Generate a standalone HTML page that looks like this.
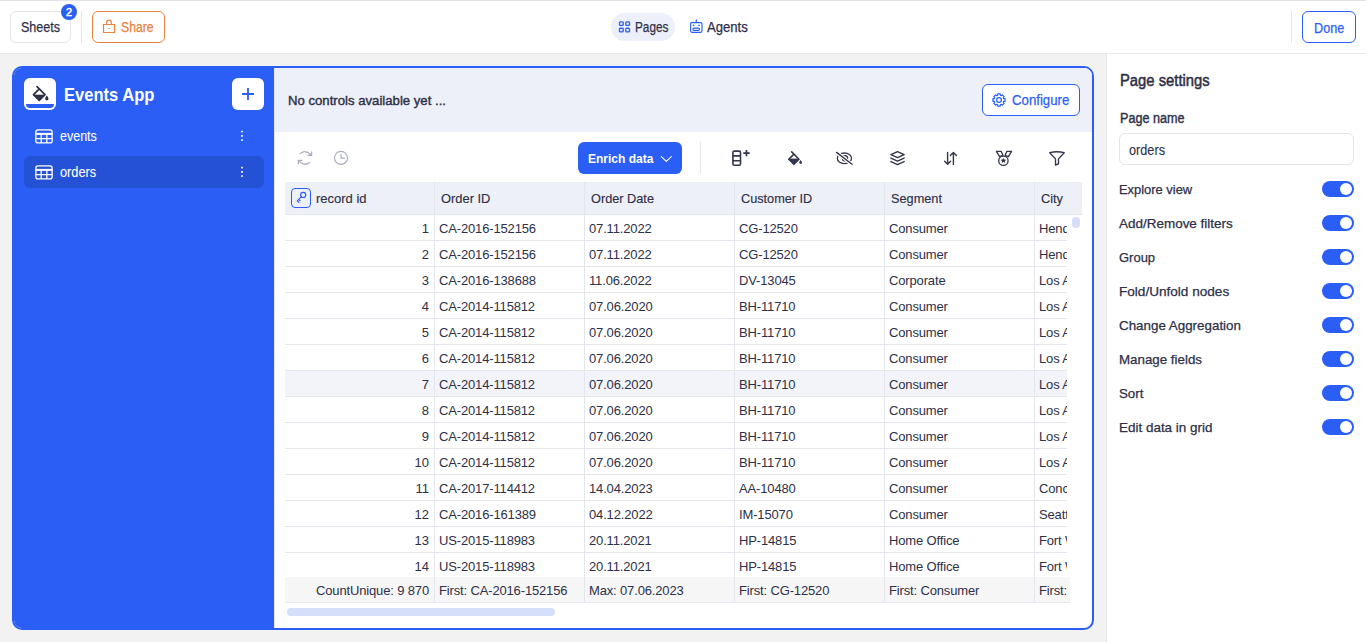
<!DOCTYPE html><html><head><meta charset="utf-8"><style>
*{box-sizing:border-box;margin:0;padding:0}
html,body{width:1366px;height:642px;overflow:hidden;background:#f2f2f2;font-family:"Liberation Sans",sans-serif;color:#2e3047}
.a{position:absolute}
.topbar{position:absolute;left:0;top:0;width:1366px;height:54px;background:#fff;border-top:1px solid #e2e2e2;border-bottom:1px solid #e6e8ee}
.btn{position:absolute;border-radius:6px}
.sep{position:absolute;width:1px;background:#e4e6ee}
.card{position:absolute;left:12px;top:66px;width:1082px;height:564px;border:2px solid #2a5ef4;border-radius:10px;overflow:hidden;background:#fff}
.t{position:absolute;white-space:nowrap;line-height:1}
.cell{position:absolute;white-space:nowrap;font-size:13px;line-height:26px;overflow:hidden;top:0}
.tog{position:absolute;left:1322px;width:32px;height:16px;border-radius:8px;background:#2a5ef4}
.tog::after{content:"";position:absolute;left:18px;top:2px;width:12px;height:12px;border-radius:6px;background:#fff}
</style></head><body><div class="topbar"></div>
<div class="btn" style="left:10px;top:11px;width:61px;height:32px;border:1px solid #e3e5ec"></div>
<div class="t" style="left:21px;top:19.95px;font-size:14px;transform:scaleX(0.8949);transform-origin:0 0;color:#2e3047;-webkit-text-stroke:0.25px currentColor;">Sheets</div>
<div class="a" style="left:61px;top:4px;width:16px;height:16px;border-radius:8px;background:#2a5ef4;color:#fff;font-size:11px;line-height:16px;text-align:center;-webkit-text-stroke:0.45px #fff">2</div>
<div class="sep" style="left:81px;top:11px;height:32px"></div>
<div class="btn" style="left:92px;top:11px;width:73px;height:32px;border:1px solid #ea8240"></div>
<svg class="a" style="left:102px;top:19px" width="14" height="15" viewBox="0 0 14 15"><path d="M1.5 5.5h11v8h-11z M4.7 5.5V3.4a2.3 2.3 0 0 1 4.6 0v2.1 M6.5 9.5h1.2" fill="none" stroke="#ea8240" stroke-width="1.2"/></svg>
<div class="t" style="left:121px;top:19.95px;font-size:14px;transform:scaleX(0.8703);transform-origin:0 0;color:#ea8240;-webkit-text-stroke:0.25px currentColor;">Share</div>
<div class="a" style="left:611px;top:13px;width:64px;height:28px;border-radius:14px;background:#edf0fa"></div>
<svg class="a" style="left:617px;top:19px" width="15" height="15" viewBox="617 19 15 15"><g fill="none" stroke="#2a5ef4" stroke-width="1.35"><rect x="619.5" y="21.8" width="3.7" height="3.6" rx="0.9"/><rect x="625.8" y="21.8" width="3.7" height="3.6" rx="0.9"/><rect x="619.5" y="28.2" width="3.7" height="3.6" rx="0.9"/><rect x="625.8" y="28.2" width="3.7" height="3.6" rx="0.9"/></g></svg>
<div class="t" style="left:634.5px;top:19.85px;font-size:14px;transform:scaleX(0.8416);transform-origin:0 0;color:#2e3047;-webkit-text-stroke:0.25px currentColor;">Pages</div>
<svg class="a" style="left:688px;top:17px" width="17" height="17" viewBox="688 17 17 17"><g fill="none" stroke="#2a5ef4" stroke-width="1.15"><rect x="690.6" y="22.6" width="11.4" height="9.7" rx="1.2"/><path d="M696.3 19.6V22.6 M698.2 25.4H699.8"/><rect x="692.9" y="28.1" width="6.6" height="2.3" rx="1.1"/></g><circle cx="693.5" cy="25.4" r="0.8" fill="#2a5ef4"/></svg>
<div class="t" style="left:707px;top:19.85px;font-size:14px;transform:scaleX(0.9362);transform-origin:0 0;color:#2e3047;-webkit-text-stroke:0.25px currentColor;">Agents</div>
<div class="sep" style="left:1291px;top:11px;height:32px"></div>
<div class="btn" style="left:1302px;top:11px;width:54px;height:32px;border:1px solid #2a5ef4"></div>
<div class="t" style="left:1314.2px;top:20.55px;font-size:14px;transform:scaleX(0.9028);transform-origin:0 0;color:#2a5ef4;-webkit-text-stroke:0.25px currentColor;">Done</div>
<div class="card">
<div class="a" style="left:0;top:0;width:260px;height:560px;background:#2a5ef4"></div>
</div>
<div class="a" style="left:24px;top:78px;width:32px;height:32px;border-radius:6px;background:#fff;overflow:hidden"><div class="a" style="left:2px;top:26px;width:28px;height:4px;background:#2a5ef4;border-radius:0 0 4px 4px"></div><svg class="a" style="left:8px;top:7px" width="18" height="18" viewBox="32 85 18 18"><path d="M37 86.6 L45 94.6 L39.25 100.35 L33.5 94.6 L39.25 88.85" fill="none" stroke="#2e3047" stroke-width="1.7" stroke-linejoin="round" stroke-linecap="round"/><path d="M33.8 95.1 L44.7 95.1 L39.25 100.35 Z" fill="#2e3047" stroke="#2e3047" stroke-width="0.8" stroke-linejoin="round"/><path d="M46.8 95.6 C47.6 96.8 48.5 97.7 48.5 98.8 A1.7 1.7 0 0 1 45.1 98.8 C45.1 97.7 46 96.8 46.8 95.6Z" fill="#2e3047"/></svg></div>
<div class="t" style="left:64.3px;top:85.96px;font-size:18px;transform:scaleX(0.9199);transform-origin:0 0;font-weight:bold;color:#fff;">Events App</div>
<div class="a" style="left:232px;top:78px;width:32px;height:32px;border-radius:6px;background:#fff"><svg class="a" style="left:8px;top:8px" width="16" height="16" viewBox="0 0 16 16"><path d="M8 2v12 M2 8h12" stroke="#2a5ef4" stroke-width="1.8"/></svg></div>
<div class="a" style="left:24px;top:156px;width:240px;height:32px;border-radius:6px;background:#2451d6"></div>
<svg class="a" style="left:35px;top:129px" width="18" height="15" viewBox="0 0 18 15"><g fill="none" stroke="#fff" stroke-width="1.3"><rect x="0.85" y="0.85" width="16.3" height="13" rx="2.2"/><path d="M0.9 4.9h16.2" stroke-width="2"/><path d="M0.9 9.6h16.2 M6.2 4.9v9 M11.8 4.9v9"/></g></svg>
<svg class="a" style="left:35px;top:165px" width="18" height="15" viewBox="0 0 18 15"><g fill="none" stroke="#fff" stroke-width="1.3"><rect x="0.85" y="0.85" width="16.3" height="13" rx="2.2"/><path d="M0.9 4.9h16.2" stroke-width="2"/><path d="M0.9 9.6h16.2 M6.2 4.9v9 M11.8 4.9v9"/></g></svg>
<div class="t" style="left:60.1px;top:129.15px;font-size:14px;transform:scaleX(0.8925);transform-origin:0 0;color:#fff;-webkit-text-stroke:0.1px currentColor;">events</div>
<div class="t" style="left:60.1px;top:164.85px;font-size:14px;transform:scaleX(0.9128);transform-origin:0 0;color:#fff;-webkit-text-stroke:0.1px currentColor;">orders</div>
<svg class="a" style="left:240px;top:130px" width="4" height="12" viewBox="0 0 4 12"><g fill="#e4eafc"><rect x="1" y="0.8" width="2" height="1.6"/><rect x="1" y="5" width="2" height="1.8"/><rect x="1" y="9.3" width="2" height="1.6"/></g></svg>
<svg class="a" style="left:240px;top:166px" width="4" height="12" viewBox="0 0 4 12"><g fill="#e4eafc"><rect x="1" y="0.8" width="2" height="1.6"/><rect x="1" y="5" width="2" height="1.8"/><rect x="1" y="9.3" width="2" height="1.6"/></g></svg>
<div class="a" style="left:274px;top:68px;width:1px;height:560px;background:#e3e6f0"></div>
<div class="a" style="left:275px;top:68px;width:817px;height:64px;background:#eef0f9;border-top-right-radius:8px"></div>
<div class="t" style="left:287.5px;top:93.60px;font-size:13px;transform:scaleX(1.0121);transform-origin:0 0;color:#2e3047;-webkit-text-stroke:0.4px currentColor;">No controls available yet ...</div>
<div class="a" style="left:982px;top:84px;width:98px;height:32px;border-radius:6px;border:1px solid #2a5ef4;background:#fff"></div>
<svg class="a" style="left:990px;top:91px" width="18" height="18" viewBox="990 91 18 18"><g fill="none" stroke="#2a5ef4" stroke-width="1.2" stroke-linejoin="round"><path d="M1003.71 98.65 L1005.06 98.71 L1005.06 101.29 L1003.71 101.35 L1003.29 102.38 L1004.20 103.38 L1002.38 105.20 L1001.38 104.29 L1000.35 104.71 L1000.29 106.06 L997.71 106.06 L997.65 104.71 L996.62 104.29 L995.62 105.20 L993.80 103.38 L994.71 102.38 L994.29 101.35 L992.94 101.29 L992.94 98.71 L994.29 98.65 L994.71 97.62 L993.80 96.62 L995.62 94.80 L996.62 95.71 L997.65 95.29 L997.71 93.94 L1000.29 93.94 L1000.35 95.29 L1001.38 95.71 L1002.38 94.80 L1004.20 96.62 L1003.29 97.62Z"/><circle cx="999" cy="100" r="2.4"/></g></svg>
<div class="t" style="left:1011.7px;top:92.95px;font-size:14px;transform:scaleX(0.9444);transform-origin:0 0;color:#2a5ef4;-webkit-text-stroke:0.25px currentColor;">Configure</div>
<svg class="a" style="left:296px;top:148px" width="18" height="19" viewBox="296 148 18 19"><g fill="none" stroke="#acafc0" stroke-width="1.25" stroke-linecap="round" stroke-linejoin="round"><path d="M300.3 153.6 Q305.3 149.3 311 154.8 M311.6 151.9 V155.4 H307.9"/><path d="M309.7 162.4 Q304.2 166.7 298.9 161.1 M298.4 163.7 V160.3 H302"/></g></svg>
<svg class="a" style="left:333px;top:150px" width="16" height="16" viewBox="333 150 16 16"><g fill="none" stroke="#acafc0" stroke-width="1.2" stroke-linecap="round"><circle cx="341" cy="157.9" r="6.5"/><path d="M341 154.3V158.1H344.8"/></g></svg>
<div class="btn" style="left:578px;top:142px;width:104px;height:32px;background:#2a5ef4"></div>
<div class="t" style="left:588.4px;top:152.30px;font-size:13px;transform:scaleX(0.9238);transform-origin:0 0;font-weight:bold;color:#fff;">Enrich data</div>
<svg class="a" style="left:659px;top:154px" width="14" height="10" viewBox="659 154 14 10"><path d="M661.3 156.6 L666.3 161.4 L671.3 156.6" fill="none" stroke="#fff" stroke-width="1.1" stroke-linecap="round" stroke-linejoin="round"/></svg>
<div class="sep" style="left:700px;top:142px;height:32px"></div>
<svg class="a" style="left:730px;top:148px" width="22" height="20" viewBox="730 148 22 20"><g fill="none" stroke="#33364c" stroke-width="1.6"><rect x="732.9" y="151.1" width="7.6" height="14.1" rx="1.3"/><path d="M732.9 155.9h7.6 M732.9 160.7h7.6"/><path d="M746.5 149.9V156.3 M743.3 153.1H749.7" stroke-width="1.7"/></g></svg>
<svg class="a" style="left:786px;top:149px" width="18" height="18" viewBox="786 149 18 18"><path d="M791.7 151.9 L799 159.2 L793.9 164.3 L788.8 159.2 L793.9 154.1" fill="none" stroke="#33364c" stroke-width="1.6" stroke-linejoin="round" stroke-linecap="round"/><path d="M788.8 159 L799 159 L793.9 164.3 Z" fill="#33364c" stroke="#33364c" stroke-width="0.8" stroke-linejoin="round"/><path d="M800.6 160.1 C801.3 161 802 161.8 802 162.6 A1.4 1.4 0 0 1 799.2 162.6 C799.2 161.8 799.9 161 800.6 160.1Z" fill="#33364c"/></svg>
<svg class="a" style="left:834px;top:149px" width="21" height="18" viewBox="834 149 21 18"><g fill="none" stroke-linecap="round"><ellipse cx="844.4" cy="158.3" rx="7.1" ry="5.3" stroke="#33364c" stroke-width="1.3"/><circle cx="845" cy="158.3" r="2.6" stroke="#33364c" stroke-width="1.3"/><path d="M836.6 152.4 L852 164.3" stroke="#fff" stroke-width="3.4"/><path d="M836.6 152.4 L852 164.3" stroke="#33364c" stroke-width="1.35"/></g></svg>
<svg class="a" style="left:888px;top:148px" width="19" height="20" viewBox="888 148 19 20"><g fill="none" stroke="#33364c" stroke-width="1.45" stroke-linejoin="round" stroke-linecap="round"><path d="M890.9 154.6 L897.5 151.6 L904.1 154.6 L897.5 157.6 Z"/><path d="M890.9 158.1 L897.5 161.1 L904.1 158.1 M890.9 161.6 L897.5 164.6 L904.1 161.6"/></g></svg>
<svg class="a" style="left:942px;top:149px" width="17" height="18" viewBox="942 149 17 18"><g fill="none" stroke="#33364c" stroke-width="1.4" stroke-linecap="round" stroke-linejoin="round"><path d="M947.6 152.4V164.2 M944.6 161.2L947.6 164.2 950.6 161.2"/><path d="M953.4 164.4V152.6 M950.4 155.6L953.4 152.6 956.4 155.6"/></g></svg>
<svg class="a" style="left:994px;top:149px" width="20" height="18" viewBox="994 149 20 18"><g stroke="#33364c" stroke-width="1.3" stroke-linejoin="round" fill="#fff"><path d="M996.4 151.3 H1001.1 L1002.9 155.3 L999.6 156.6 Z"/><path d="M1011.6 151.3 H1006.9 L1005.1 155.3 L1008.4 156.6 Z"/><circle cx="1003.4" cy="160.75" r="4.7"/></g><path d="M1003.4 157.9l.85 1.7 1.9.25-1.4 1.3.4 1.9-1.75-.95-1.75.95.4-1.9-1.4-1.3 1.9-.25z" fill="#33364c"/></svg>
<svg class="a" style="left:1046px;top:149px" width="21" height="19" viewBox="1046 149 21 19"><path d="M1049.7 152.7 C1054.5 151.5 1059.5 151.5 1064.2 152.7 L1058.5 158.9 V163.8 L1055.5 165 V158.9 Z" fill="none" stroke="#33364c" stroke-width="1.35" stroke-linejoin="round"/></svg>
<div class="a" style="left:285px;top:182px;width:797px;height:33px;background:#eef0f8;border-bottom:1px solid #e4e6ee"></div>
<div class="a" style="left:434px;top:182px;width:1px;height:421px;background:#e4e6ee"></div>
<div class="a" style="left:584px;top:182px;width:1px;height:421px;background:#e4e6ee"></div>
<div class="a" style="left:734px;top:182px;width:1px;height:421px;background:#e4e6ee"></div>
<div class="a" style="left:884px;top:182px;width:1px;height:421px;background:#e4e6ee"></div>
<div class="a" style="left:1034px;top:182px;width:1px;height:421px;background:#e4e6ee"></div>
<div class="a" style="left:291px;top:188px;width:20px;height:20px;border:1px solid #2a5ef4;border-radius:4px"></div>
<svg class="a" style="left:292px;top:189px" width="18" height="18" viewBox="292 189 18 18"><g fill="none" stroke="#2a5ef4" stroke-width="1.15" stroke-linecap="round" stroke-linejoin="round"><circle cx="303.2" cy="194.9" r="2.55"/><path d="M301.4 196.7 L297.3 200.8 L298.9 202.4 M298.7 199.4 L300 200.7"/></g></svg>
<div class="t" style="left:315.5px;top:191.90px;font-size:13px;transform:scaleX(0.9981);transform-origin:0 0;color:#2e3047;-webkit-text-stroke:0.15px currentColor;">record id</div>
<div class="t" style="left:440.9px;top:191.90px;font-size:13px;transform:scaleX(0.9911);transform-origin:0 0;color:#2e3047;-webkit-text-stroke:0.15px currentColor;">Order ID</div>
<div class="t" style="left:591.2px;top:191.90px;font-size:13px;transform:scaleX(0.9796);transform-origin:0 0;color:#2e3047;-webkit-text-stroke:0.15px currentColor;">Order Date</div>
<div class="t" style="left:740.9px;top:191.90px;font-size:13px;transform:scaleX(0.9771);transform-origin:0 0;color:#2e3047;-webkit-text-stroke:0.15px currentColor;">Customer ID</div>
<div class="t" style="left:891px;top:191.90px;font-size:13px;transform:scaleX(0.9799);transform-origin:0 0;color:#2e3047;-webkit-text-stroke:0.15px currentColor;">Segment</div>
<div class="t" style="left:1040.7px;top:191.90px;font-size:13px;transform:scaleX(0.9826);transform-origin:0 0;color:#2e3047;-webkit-text-stroke:0.15px currentColor;">City</div>
<div class="a" style="left:285px;top:215px;width:785px;height:387px;overflow:hidden;letter-spacing:-0.15px">
<div class="a" style="left:0;top:0px;width:782px;height:26px;background:#fff;border-bottom:1px solid #e4e6ee">
<div class="cell" style="left:0;top:1px;width:144px;text-align:right;letter-spacing:0">1</div>
<div class="cell" style="left:154px;top:1px;width:144px">CA-2016-152156</div>
<div class="cell" style="left:304px;top:1px;width:144px">07.11.2022</div>
<div class="cell" style="left:454px;top:1px;width:144px">CG-12520</div>
<div class="cell" style="left:604px;top:1px;width:144px">Consumer</div>
<div class="cell" style="left:754px;top:1px;width:28px">Henderson</div>
</div>
<div class="a" style="left:0;top:26px;width:782px;height:26px;background:#fff;border-bottom:1px solid #e4e6ee">
<div class="cell" style="left:0;top:1px;width:144px;text-align:right;letter-spacing:0">2</div>
<div class="cell" style="left:154px;top:1px;width:144px">CA-2016-152156</div>
<div class="cell" style="left:304px;top:1px;width:144px">07.11.2022</div>
<div class="cell" style="left:454px;top:1px;width:144px">CG-12520</div>
<div class="cell" style="left:604px;top:1px;width:144px">Consumer</div>
<div class="cell" style="left:754px;top:1px;width:28px">Henderson</div>
</div>
<div class="a" style="left:0;top:52px;width:782px;height:26px;background:#fff;border-bottom:1px solid #e4e6ee">
<div class="cell" style="left:0;top:1px;width:144px;text-align:right;letter-spacing:0">3</div>
<div class="cell" style="left:154px;top:1px;width:144px">CA-2016-138688</div>
<div class="cell" style="left:304px;top:1px;width:144px">11.06.2022</div>
<div class="cell" style="left:454px;top:1px;width:144px">DV-13045</div>
<div class="cell" style="left:604px;top:1px;width:144px">Corporate</div>
<div class="cell" style="left:754px;top:1px;width:28px">Los Angeles</div>
</div>
<div class="a" style="left:0;top:78px;width:782px;height:26px;background:#fff;border-bottom:1px solid #e4e6ee">
<div class="cell" style="left:0;top:1px;width:144px;text-align:right;letter-spacing:0">4</div>
<div class="cell" style="left:154px;top:1px;width:144px">CA-2014-115812</div>
<div class="cell" style="left:304px;top:1px;width:144px">07.06.2020</div>
<div class="cell" style="left:454px;top:1px;width:144px">BH-11710</div>
<div class="cell" style="left:604px;top:1px;width:144px">Consumer</div>
<div class="cell" style="left:754px;top:1px;width:28px">Los Angeles</div>
</div>
<div class="a" style="left:0;top:104px;width:782px;height:26px;background:#fff;border-bottom:1px solid #e4e6ee">
<div class="cell" style="left:0;top:1px;width:144px;text-align:right;letter-spacing:0">5</div>
<div class="cell" style="left:154px;top:1px;width:144px">CA-2014-115812</div>
<div class="cell" style="left:304px;top:1px;width:144px">07.06.2020</div>
<div class="cell" style="left:454px;top:1px;width:144px">BH-11710</div>
<div class="cell" style="left:604px;top:1px;width:144px">Consumer</div>
<div class="cell" style="left:754px;top:1px;width:28px">Los Angeles</div>
</div>
<div class="a" style="left:0;top:130px;width:782px;height:26px;background:#fff;border-bottom:1px solid #e4e6ee">
<div class="cell" style="left:0;top:1px;width:144px;text-align:right;letter-spacing:0">6</div>
<div class="cell" style="left:154px;top:1px;width:144px">CA-2014-115812</div>
<div class="cell" style="left:304px;top:1px;width:144px">07.06.2020</div>
<div class="cell" style="left:454px;top:1px;width:144px">BH-11710</div>
<div class="cell" style="left:604px;top:1px;width:144px">Consumer</div>
<div class="cell" style="left:754px;top:1px;width:28px">Los Angeles</div>
</div>
<div class="a" style="left:0;top:156px;width:782px;height:26px;background:#f3f4f9;border-bottom:1px solid #e4e6ee">
<div class="cell" style="left:0;top:1px;width:144px;text-align:right;letter-spacing:0">7</div>
<div class="cell" style="left:154px;top:1px;width:144px">CA-2014-115812</div>
<div class="cell" style="left:304px;top:1px;width:144px">07.06.2020</div>
<div class="cell" style="left:454px;top:1px;width:144px">BH-11710</div>
<div class="cell" style="left:604px;top:1px;width:144px">Consumer</div>
<div class="cell" style="left:754px;top:1px;width:28px">Los Angeles</div>
</div>
<div class="a" style="left:0;top:182px;width:782px;height:26px;background:#fff;border-bottom:1px solid #e4e6ee">
<div class="cell" style="left:0;top:1px;width:144px;text-align:right;letter-spacing:0">8</div>
<div class="cell" style="left:154px;top:1px;width:144px">CA-2014-115812</div>
<div class="cell" style="left:304px;top:1px;width:144px">07.06.2020</div>
<div class="cell" style="left:454px;top:1px;width:144px">BH-11710</div>
<div class="cell" style="left:604px;top:1px;width:144px">Consumer</div>
<div class="cell" style="left:754px;top:1px;width:28px">Los Angeles</div>
</div>
<div class="a" style="left:0;top:208px;width:782px;height:26px;background:#fff;border-bottom:1px solid #e4e6ee">
<div class="cell" style="left:0;top:1px;width:144px;text-align:right;letter-spacing:0">9</div>
<div class="cell" style="left:154px;top:1px;width:144px">CA-2014-115812</div>
<div class="cell" style="left:304px;top:1px;width:144px">07.06.2020</div>
<div class="cell" style="left:454px;top:1px;width:144px">BH-11710</div>
<div class="cell" style="left:604px;top:1px;width:144px">Consumer</div>
<div class="cell" style="left:754px;top:1px;width:28px">Los Angeles</div>
</div>
<div class="a" style="left:0;top:234px;width:782px;height:26px;background:#fff;border-bottom:1px solid #e4e6ee">
<div class="cell" style="left:0;top:1px;width:144px;text-align:right;letter-spacing:0">10</div>
<div class="cell" style="left:154px;top:1px;width:144px">CA-2014-115812</div>
<div class="cell" style="left:304px;top:1px;width:144px">07.06.2020</div>
<div class="cell" style="left:454px;top:1px;width:144px">BH-11710</div>
<div class="cell" style="left:604px;top:1px;width:144px">Consumer</div>
<div class="cell" style="left:754px;top:1px;width:28px">Los Angeles</div>
</div>
<div class="a" style="left:0;top:260px;width:782px;height:26px;background:#fff;border-bottom:1px solid #e4e6ee">
<div class="cell" style="left:0;top:1px;width:144px;text-align:right;letter-spacing:0">11</div>
<div class="cell" style="left:154px;top:1px;width:144px">CA-2017-114412</div>
<div class="cell" style="left:304px;top:1px;width:144px">14.04.2023</div>
<div class="cell" style="left:454px;top:1px;width:144px">AA-10480</div>
<div class="cell" style="left:604px;top:1px;width:144px">Consumer</div>
<div class="cell" style="left:754px;top:1px;width:28px">Concord</div>
</div>
<div class="a" style="left:0;top:286px;width:782px;height:26px;background:#fff;border-bottom:1px solid #e4e6ee">
<div class="cell" style="left:0;top:1px;width:144px;text-align:right;letter-spacing:0">12</div>
<div class="cell" style="left:154px;top:1px;width:144px">CA-2016-161389</div>
<div class="cell" style="left:304px;top:1px;width:144px">04.12.2022</div>
<div class="cell" style="left:454px;top:1px;width:144px">IM-15070</div>
<div class="cell" style="left:604px;top:1px;width:144px">Consumer</div>
<div class="cell" style="left:754px;top:1px;width:28px">Seattle</div>
</div>
<div class="a" style="left:0;top:312px;width:782px;height:26px;background:#fff;border-bottom:1px solid #e4e6ee">
<div class="cell" style="left:0;top:1px;width:144px;text-align:right;letter-spacing:0">13</div>
<div class="cell" style="left:154px;top:1px;width:144px">US-2015-118983</div>
<div class="cell" style="left:304px;top:1px;width:144px">20.11.2021</div>
<div class="cell" style="left:454px;top:1px;width:144px">HP-14815</div>
<div class="cell" style="left:604px;top:1px;width:144px">Home Office</div>
<div class="cell" style="left:754px;top:1px;width:28px">Fort Worth</div>
</div>
<div class="a" style="left:0;top:338px;width:782px;height:26px;background:#fff;border-bottom:1px solid #e4e6ee">
<div class="cell" style="left:0;top:1px;width:144px;text-align:right;letter-spacing:0">14</div>
<div class="cell" style="left:154px;top:1px;width:144px">US-2015-118983</div>
<div class="cell" style="left:304px;top:1px;width:144px">20.11.2021</div>
<div class="cell" style="left:454px;top:1px;width:144px">HP-14815</div>
<div class="cell" style="left:604px;top:1px;width:144px">Home Office</div>
<div class="cell" style="left:754px;top:1px;width:28px">Fort Worth</div>
</div>
<div class="a" style="left:0;top:362px;width:785px;height:25px;background:#f6f6f7">
<div class="cell" style="left:0;top:1px;width:144px;text-align:right">CountUnique: 9 870</div>
<div class="cell" style="left:154px;top:1px;width:144px">First: CA-2016-152156</div>
<div class="cell" style="left:304px;top:1px;width:144px">Max: 07.06.2023</div>
<div class="cell" style="left:454px;top:1px;width:144px">First: CG-12520</div>
<div class="cell" style="left:604px;top:1px;width:144px">First: Consumer</div>
<div class="cell" style="left:754px;top:1px;width:28px">First: Henderson</div>
</div>
</div>
<div class="a" style="left:285px;top:602px;width:785px;height:1px;background:#e4e6ee"></div>
<div class="a" style="left:434px;top:215px;width:1px;height:387px;background:#e4e6ee"></div>
<div class="a" style="left:584px;top:215px;width:1px;height:387px;background:#e4e6ee"></div>
<div class="a" style="left:734px;top:215px;width:1px;height:387px;background:#e4e6ee"></div>
<div class="a" style="left:884px;top:215px;width:1px;height:387px;background:#e4e6ee"></div>
<div class="a" style="left:1034px;top:215px;width:1px;height:387px;background:#e4e6ee"></div>
<div class="a" style="left:287px;top:608px;width:268px;height:8px;border-radius:4px;background:#d5dffa"></div>
<div class="a" style="left:1072px;top:217px;width:8px;height:11px;border-radius:4px;background:#d5dffa"></div>
<div class="a" style="left:1106px;top:54px;width:260px;height:588px;background:#fff;border-left:1px solid #e6e8ee"></div>
<div class="t" style="left:1119.5px;top:72.66px;font-size:16px;transform:scaleX(0.9244);transform-origin:0 0;color:#2e3047;-webkit-text-stroke:0.5px currentColor;">Page settings</div>
<div class="t" style="left:1119.5px;top:110.95px;font-size:14px;transform:scaleX(0.9011);transform-origin:0 0;color:#2e3047;-webkit-text-stroke:0.4px currentColor;">Page name</div>
<div class="a" style="left:1119px;top:133px;width:235px;height:32px;border:1px solid #e3e5ec;border-radius:6px"></div>
<div class="t" style="left:1129.4px;top:142.65px;font-size:14px;transform:scaleX(0.9078);transform-origin:0 0;color:#2e3047;-webkit-text-stroke:0.1px currentColor;">orders</div>
<div class="t" style="left:1119.4px;top:182.90px;font-size:13px;transform:scaleX(0.9930);transform-origin:0 0;color:#2e3047;-webkit-text-stroke:0.25px currentColor;">Explore view</div>
<div class="tog" style="top:181px"></div>
<div class="t" style="left:1119.4px;top:216.90px;font-size:13px;transform:scaleX(1.0360);transform-origin:0 0;color:#2e3047;-webkit-text-stroke:0.25px currentColor;">Add/Remove filters</div>
<div class="tog" style="top:215px"></div>
<div class="t" style="left:1119.4px;top:250.90px;font-size:13px;transform:scaleX(0.9989);transform-origin:0 0;color:#2e3047;-webkit-text-stroke:0.25px currentColor;">Group</div>
<div class="tog" style="top:249px"></div>
<div class="t" style="left:1119.4px;top:284.90px;font-size:13px;transform:scaleX(1.0441);transform-origin:0 0;color:#2e3047;-webkit-text-stroke:0.25px currentColor;">Fold/Unfold nodes</div>
<div class="tog" style="top:283px"></div>
<div class="t" style="left:1119.4px;top:318.90px;font-size:13px;transform:scaleX(1.0287);transform-origin:0 0;color:#2e3047;-webkit-text-stroke:0.25px currentColor;">Change Aggregation</div>
<div class="tog" style="top:317px"></div>
<div class="t" style="left:1119.4px;top:352.90px;font-size:13px;transform:scaleX(1.0251);transform-origin:0 0;color:#2e3047;-webkit-text-stroke:0.25px currentColor;">Manage fields</div>
<div class="tog" style="top:351px"></div>
<div class="t" style="left:1119.4px;top:386.90px;font-size:13px;transform:scaleX(1.0233);transform-origin:0 0;color:#2e3047;-webkit-text-stroke:0.25px currentColor;">Sort</div>
<div class="tog" style="top:385px"></div>
<div class="t" style="left:1119.4px;top:420.90px;font-size:13px;transform:scaleX(1.0348);transform-origin:0 0;color:#2e3047;-webkit-text-stroke:0.25px currentColor;">Edit data in grid</div>
<div class="tog" style="top:419px"></div></body></html>
